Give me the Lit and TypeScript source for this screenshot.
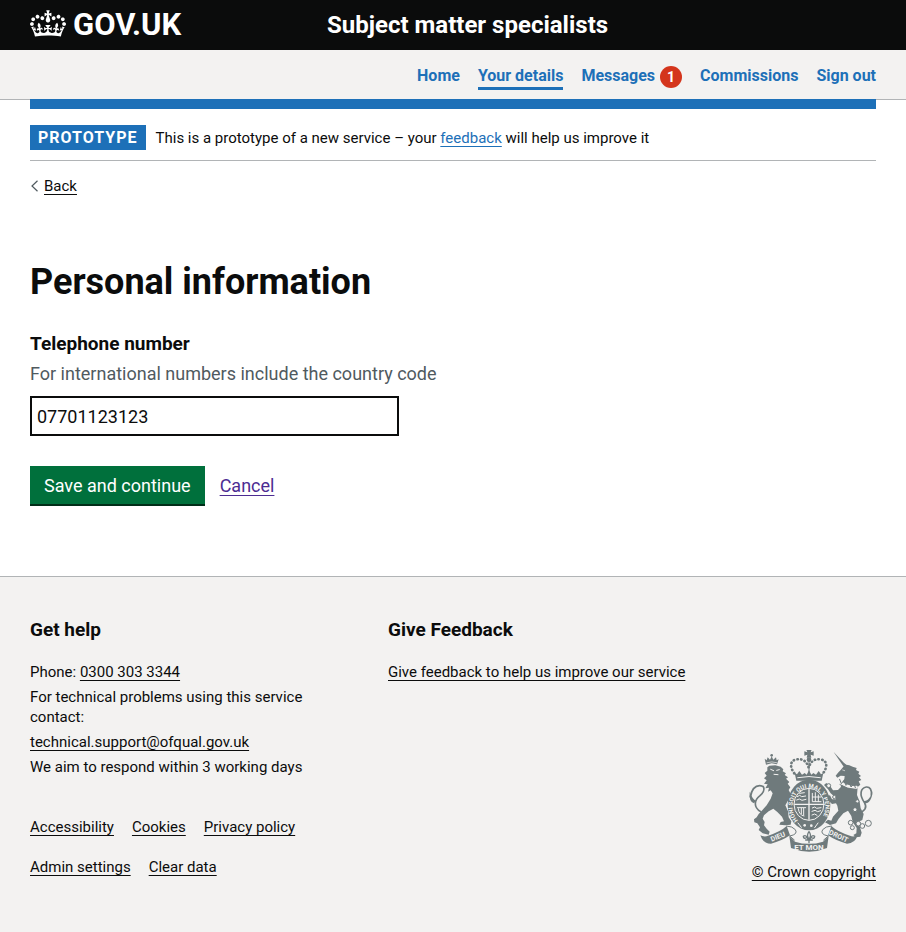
import { LitElement, html, svg, css } from "lit";
import { customElement, property, state } from "lit/decorators.js";

interface NavItem {
  label: string;
  current?: boolean;
  count?: number;
}

const NAV_ITEMS: NavItem[] = [
  { label: "Home" },
  { label: "Your details", current: true },
  { label: "Messages", count: 1 },
  { label: "Commissions" },
  { label: "Sign out" },
];

const META_LINKS: string[][] = [
  ["Accessibility", "Cookies", "Privacy policy"],
  ["Admin settings", "Clear data"],
];

const linkStyles = css`
  a {
    color: inherit;
    text-decoration: underline;
    text-decoration-thickness: 1px;
    text-underline-offset: 3px;
    text-decoration-skip-ink: none;
  }
`;

const crown = svg`
  <path fill="currentColor" fill-rule="evenodd" d="M25 30.2c3.5 1.5 7.7-.2 9.1-3.7 1.5-3.6-.2-7.8-3.9-9.2-3.6-1.4-7.6.3-9.1 3.9-1.4 3.5.3 7.5 3.9 9zM9 39.5c3.6 1.5 7.8-.2 9.2-3.7 1.5-3.6-.2-7.8-3.9-9.1-3.6-1.5-7.6.2-9.1 3.8-1.4 3.5.3 7.5 3.8 9zM4.4 57.2c3.5 1.5 7.7-.2 9.1-3.8 1.5-3.6-.2-7.7-3.9-9.1-3.5-1.5-7.6.3-9.1 3.8-1.4 3.5.3 7.6 3.9 9.1zm38.3-21.4c3.5 1.5 7.7-.2 9.1-3.8 1.5-3.6-.2-7.7-3.9-9.1-3.6-1.5-7.6.3-9.1 3.8-1.3 3.6.4 7.7 3.9 9.1zm64.4-5.6c-3.6 1.5-7.8-.2-9.1-3.7-1.5-3.6.2-7.8 3.8-9.2 3.6-1.4 7.7.3 9.2 3.9 1.3 3.5-.4 7.5-3.9 9zm15.9 9.3c-3.6 1.5-7.7-.2-9.1-3.7-1.5-3.6.2-7.8 3.7-9.1 3.6-1.5 7.7.2 9.2 3.8 1.5 3.5-.3 7.5-3.8 9zm4.7 17.7c-3.6 1.5-7.8-.2-9.2-3.8-1.5-3.6.2-7.7 3.9-9.1 3.6-1.5 7.7.3 9.2 3.8 1.3 3.5-.4 7.6-3.9 9.1zM89.3 35.8c-3.6 1.5-7.8-.2-9.2-3.8-1.4-3.6.2-7.7 3.9-9.1 3.6-1.5 7.7.3 9.2 3.8 1.4 3.6-.3 7.7-3.9 9.1zM69.7 17.7l8.9 4.7V9.3l-8.9 2.8c-.2-.3-.5-.6-.9-.9L72.4 0H59.6l3.5 11.2c-.3.3-.6.5-.9.9l-8.8-2.8v13.1l8.8-4.7c.3.3.6.7.9.9l-5 15.4v.1c-.2.8-.4 1.6-.4 2.4 0 4.1 3.1 7.5 7 8.1h.2c.3 0 .7.1 1 .1.4 0 .7 0 1-.1h.2c4-.6 7.1-4.1 7.1-8.1 0-.8-.1-1.7-.4-2.4V34l-5.1-15.4c.4-.2.7-.6 1-.9zM66 92.8c16.9 0 32.8 1.1 47.1 3.2 4-16.9 8.9-26.7 14-33.5l-9.6-3.4c1 4.9 1.1 7.2 0 10.2-1.5-1.4-3-4.3-4.2-8.7L108.6 76c2.8-2 5-3.2 7.5-3.3-4.4 9.4-10 11.9-13.6 11.2-4.3-.8-6.3-4.6-5.6-7.9 1-4.7 5.7-5.9 8-.5 4.3-8.7-3-11.4-7.6-8.8 7.1-7.2 7.9-13.5 2.1-21.1-8 6.1-8.1 12.3-4.5 20.8-4.7-5.4-12.1-2.5-9.5 6.2 3.4-5.2 7.9-2 7.2 3.1-.6 4.3-6.4 7.8-13.5 7.2-10.3-.9-10.9-8-11.2-13.8 2.5-.5 7.1 1.8 11 7.3L80.2 60c-4.1 4.4-8 5.3-12.3 5.4 1.4-4.4 8-11.6 8-11.6H55.5s6.4 7.2 7.9 11.6c-4.2-.1-8-1-12.3-5.4l1.4 16.4c3.9-5.5 8.5-7.7 10.9-7.3-.3 5.8-.9 12.8-11.1 13.8-7.2.6-12.9-2.9-13.5-7.2-.7-5 3.8-8.3 7.1-3.1 2.7-8.7-4.6-11.6-9.4-6.2 3.7-8.5 3.6-14.7-4.6-20.8-5.8 7.6-5 13.9 2.2 21.1-4.7-2.6-11.9.1-7.7 8.8 2.3-5.5 7.1-4.2 8.1.5.7 3.3-1.3 7.1-5.7 7.9-3.5.7-9-1.8-13.5-11.2 2.5.1 4.7 1.3 7.5 3.3l-4.7-15.4c-1.2 4.4-2.7 7.2-4.3 8.7-1.1-3-.9-5.3 0-10.2l-9.5 3.4c5 6.9 9.9 16.7 14 33.5 14.8-2.1 30.8-3.2 47.7-3.2z"/>
`;

@customElement("service-header")
class ServiceHeader extends LitElement {
  @property() serviceName = "";

  static styles = css`
    :host {
      display: block;
      background: #0b0c0c;
      color: #ffffff;
    }
    .bar {
      display: grid;
      grid-template-columns: 297fr 549fr;
      align-items: center;
      height: 50px;
      margin: 0 30px;
    }
    a {
      color: inherit;
      text-decoration: none;
      font-weight: 700;
    }
    .logo {
      display: flex;
      align-items: flex-start;
      gap: 7px;
      font-size: 31px;
      line-height: 30px;
    }
    .crown {
      display: block;
      width: 36px;
      height: 27px;
    }
    .service {
      font-size: 24px;
      line-height: 30px;
    }
  `;

  render() {
    return html`
      <header class="bar">
        <a class="logo" href="#">
          <svg class="crown" viewBox="0 0 132 97" aria-hidden="true">${crown}</svg>
          <span>GOV.UK</span>
        </a>
        <a class="service" href="#">${this.serviceName}</a>
      </header>
    `;
  }
}

@customElement("primary-nav")
class PrimaryNav extends LitElement {
  static styles = css`
    :host {
      display: block;
      background: #f3f2f1;
      border-bottom: 1px solid #b1b4b6;
      color: #1d70b8;
    }
    ul {
      display: flex;
      justify-content: flex-end;
      gap: 18px;
      height: 49px;
      margin: 0 30px;
      padding: 0;
      list-style: none;
    }
    li {
      display: flex;
      align-items: center;
      gap: 5px;
    }
    a {
      padding: 5px 0 0;
      border-bottom: 3px solid transparent;
      color: inherit;
      font-size: 16px;
      font-weight: 700;
      line-height: 22px;
      text-decoration: none;
    }
    a[aria-current] {
      border-bottom-color: currentColor;
    }
    .count {
      width: 22px;
      margin-top: 4px;
      border-radius: 50%;
      background: #d4351c;
      color: #ffffff;
      font-size: 14px;
      font-weight: 700;
      line-height: 22px;
      text-align: center;
    }
  `;

  render() {
    return html`
      <nav aria-label="Account">
        <ul>
          ${NAV_ITEMS.map(
            (item) => html`<li>
              ${item.current
                ? html`<a href="#" aria-current="page">${item.label}</a>`
                : html`<a href="#">${item.label}</a>`}
              ${item.count ? html`<span class="count">${item.count}</span>` : ""}
            </li>`
          )}
        </ul>
      </nav>
    `;
  }
}

@customElement("royal-arms")
class RoyalArms extends LitElement {
  static styles = css`
    :host {
      display: block;
      color: #6f7a7c;
    }
    svg {
      display: block;
      width: 125px;
      height: 102px;
    }
    text {
      font-weight: 700;
    }
    .ink {
      fill: currentColor;
    }
    .paper {
      fill: #f3f2f1;
    }
    .ink-line {
      fill: none;
      stroke: currentColor;
      stroke-linecap: round;
      stroke-linejoin: round;
    }
    .paper-line {
      fill: none;
      stroke: #f3f2f1;
      stroke-linecap: round;
    }
  `;

  render() {
    return html`
      <svg viewBox="36 30 375 306" role="img" aria-label="Royal coat of arms">
        <!-- lion -->
        <path class="ink" d="M90 74L86 56l6 5 3-9 7 7 5-10 5 10 8-7 2 9 6-3-5 15-16-3z" />
        <path class="paper-line" stroke-width="2" d="M93 68q14-5 29 0" />
        <circle class="ink" cx="107" cy="46" r="4" />
        <path class="ink" d="M94 82L100 77 118 76 134 80 142 88 140 94 150 100 146 105 156 112 150 116 160 126 155 131 163 142 158 150 164 162 172 172 168 184 157 180 148 196 156 214 158 232 166 244 164 254 148 256 130 254 134 246 144 244 138 230 124 216 112 206 98 214 84 226 80 236 86 246 84 256 92 266 101 275 98 284 80 280 68 270 72 262 64 250 55 247 54 238 62 232 68 222 76 214 92 196 104 176 110 160 104 151 96 155 99 143 88 145 95 133 84 131 92 121 84 115 92 107 86 99 94 92z" />
        <path class="paper-line" stroke-width="3" d="M104 88l9 4 M122 91l8-2 M114 103l12 1" />
        <path class="ink-line" stroke-width="5" d="M74 215c-22-14-20-34-2-48 16-14 16-30-1-30-15 0-24 12-28 34" />
        <path class="ink" d="M41 155q9 24 19 27l-6 8q-16-6-13-35z" />
        <!-- crown -->
        <path class="ink" d="M211 29h16l-3 8 9-3v13l-9-3 2 9h-14l2-9-9 3V34l9 3z" />
        <circle class="ink" cx="219" cy="59" r="7" />
        <path class="ink-line" stroke-width="3" d="M219 62v40" />
        <path class="ink-line" stroke-width="8" stroke-dasharray="1 10" d="M175 100c-15-20-13-39 8-42 17-2 29 5 35 25 6-20 18-27 35-25 21 3 23 22 8 42" />
        <path class="ink" d="M176 99l7 4 7-10 8 11 8-5 6 5 7-13 7 13 6-5 8 5 8-11 7 10 7-4-5 23H181z" />
        <path class="paper-line" stroke-width="3" d="M185 113q34-7 68 0" />
        <!-- shield and garter -->
        <ellipse class="ink" cx="219" cy="195" rx="64" ry="76" />
        <ellipse class="paper-line" cx="219" cy="193" rx="45" ry="48" stroke-width="3" />
        <path class="paper-line" stroke-width="4" d="M219 148v90 M176 193h86" />
        <path class="paper-line" stroke-width="3" d="M184 170l7-4 6 4 12-2 M182 180l8-3 8 4 12-3 M191 160l14-2
          M229 160v25h26 M238 158v26 M229 171h26 M247 165v20
          M184 203h25 M187 206q2 20 17 22 M196 205v16 M203 205v20
          M229 204l7-3 6 4 13-2 M228 214l9-3 8 4 9-3 M228 225l8-3 7 4" />
        <path id="garter" fill="none" d="M186 241A49 56 0 1 1 252 241" />
        <text class="paper" font-size="18"><textPath href="#garter">HONI SOIT QUI MAL Y PENSE</textPath></text>
        <circle class="paper" cx="206" cy="256" r="4" />
        <circle class="paper" cx="226" cy="257" r="4" />
        <path class="paper-line" stroke-width="3" d="M186 249l10 13 M246 249l-10 14" />
        <!-- unicorn -->
        <path class="ink" d="M293 36L329 74 322 79z" />
        <path class="ink" d="M322 80L325 70 331 74 340 76 350 80 362 84 360 90 370 95 367 101 375 108 369 112 376 120 368 124 373 134 365 141 363 165 371 185 374 205 383 222 379 240 366 246 372 262 377 278 373 290 360 292 352 285 361 280 362 264 350 246 346 228 336 212 322 220 308 236 300 250 282 255 267 247 276 239 286 242 291 230 307 212 304 197 300 190 288 192 276 180 273 169 282 166 288 178 300 178 296 170 284 160 276 148 264 135 271 129 284 140 291 151 306 150 314 142 318 130 325 117 326 108 314 107 304 113 299 107 306 98 314 90z" />
        <path class="paper-line" stroke-width="2" d="M320 90l6 2" />
        <path class="paper-line" stroke-width="9" d="M315 128q22 16 46 14" />
        <path class="ink-line" stroke-width="3" d="M311 118l5 13 8-10 6 15 10-11 5 16 9-10 4 12 M312 134q22 14 46 14" />
        <path class="ink-line" stroke-width="5" d="M368 219c18-5 26-16 18-30-18-26-12-45 5-48 11-1 17 9 15 24" />
        <path class="ink" d="M410 152c-2 26-10 38-24 38l-4-7c14 0 22-10 28-31z" />
        <g fill="#f3f2f1" stroke="currentColor" stroke-width="3">
          <circle cx="278" cy="137" r="6" />
          <circle cx="295" cy="171" r="5" />
          <circle cx="364" cy="184" r="5" />
          <circle cx="357" cy="209" r="6" />
          <circle cx="344" cy="248" r="7" />
          <circle cx="349" cy="263" r="6" />
          <circle cx="367" cy="251" r="7" />
          <circle cx="379" cy="258" r="7" />
          <circle cx="397" cy="250" r="9" />
        </g>
        <!-- motto ribbon -->
        <path class="ink" d="M73 286q14 6 23 1 38-12 56-29l10 28q-25 17-57 25-24 0-32-25z M365 286q-14 6-23 1-38-12-56-29l-10 28q25 17 57 25 24 0 32-25z" />
        <path class="ink-line" stroke-width="3" d="M152 258q18 1 26 11 9 14-17 19l14 12 M286 258q-18 1-26 11-9 14 17 19l-14 12" />
        <path class="ink" d="M160 288l17 17q42 13 84 0l17-17-5 36q-53 22-108 0z" />
        <text class="paper" font-size="21" transform="translate(107 305) rotate(-22)">DIEU</text>
        <text class="paper" font-size="21" transform="translate(277 282) rotate(25)">DROIT</text>
        <text class="paper" font-size="24" x="219" y="331" text-anchor="middle">ET MON</text>
        <!-- fleur-de-lis -->
        <path class="ink-line" stroke-width="4" d="M219 275q-9 11 0 23 9-12 0-23 M216 299q-5-17-14-10 1 8 8 5 M222 299q5-17 14-10-1 8-8 5 M209 300h20 M219 300v8" />
      </svg>
    `;
  }
}

@customElement("service-footer")
class ServiceFooter extends LitElement {
  static styles = [
    linkStyles,
    css`
      :host {
        display: block;
        flex: 1;
        border-top: 1px solid #b1b4b6;
        background: #f3f2f1;
        font-size: 15px;
        line-height: 20px;
      }
      footer {
        padding: 40px 30px 35px;
      }
      .columns {
        display: grid;
        grid-template-columns: 328fr 488fr;
        gap: 30px;
      }
      h2 {
        margin: 0 0 20px;
        font-size: 19px;
        line-height: 25px;
      }
      p {
        margin: 0 0 5px;
      }
      .meta {
        padding-top: 35px;
      }
      .meta ul {
        display: flex;
        gap: 18px;
        margin: 0 0 20px;
        padding: 0;
        list-style: none;
      }
      .lower {
        display: grid;
        grid-template-columns: 1fr auto;
        align-items: end;
      }
      .copyright {
        display: flex;
        flex-direction: column;
        align-items: flex-end;
        gap: 10px;
        margin-top: -32px;
        padding-bottom: 15px;
      }
      royal-arms {
        margin: 0 3px;
      }
    `,
  ];

  render() {
    return html`
      <footer>
        <div class="columns">
          <section>
            <h2>Get help</h2>
            <p>Phone: <a href="#">0300 303 3344</a></p>
            <p>For technical problems using this service contact:</p>
            <p><a href="#">technical.support@ofqual.gov.uk</a></p>
            <p>We aim to respond within 3 working days</p>
          </section>
          <section>
            <h2>Give Feedback</h2>
            <p><a href="#">Give feedback to help us improve our service</a></p>
          </section>
        </div>
        <div class="lower">
          <div class="meta">
            ${META_LINKS.map(
              (row) => html`<ul>
                ${row.map((label) => html`<li><a href="#">${label}</a></li>`)}
              </ul>`
            )}
          </div>
          <div class="copyright">
            <royal-arms></royal-arms>
            <a href="#">© Crown copyright</a>
          </div>
        </div>
      </footer>
    `;
  }
}

@customElement("app-root")
class AppRoot extends LitElement {
  @state() telephone = "07701123123";

  static styles = [
    linkStyles,
    css`
      :host {
        display: flex;
        flex-direction: column;
        min-height: 100vh;
        background: #ffffff;
        color: #0b0c0c;
        font-family: Roboto, "Liberation Sans", sans-serif;
      }
      .page {
        padding: 0 30px 70px;
      }
      .strip {
        height: 10px;
        margin-top: -1px;
        background: #1d70b8;
      }
      .phase {
        display: flex;
        align-items: center;
        gap: 10px;
        margin: 0;
        padding: 16px 0 10px;
        border-bottom: 1px solid #b1b4b6;
        font-size: 15px;
        line-height: 20px;
      }
      .phase a {
        color: #1d70b8;
      }
      .tag {
        padding: 0 8px;
        background: #1d70b8;
        color: #ffffff;
        font-size: 16px;
        letter-spacing: 1px;
        line-height: 25px;
      }
      .back {
        display: flex;
        align-items: center;
        gap: 5px;
        width: max-content;
        margin-top: 15px;
        font-size: 15px;
        line-height: 20px;
        text-decoration: none;
      }
      .back span {
        text-decoration: underline;
        text-decoration-thickness: 1px;
        text-underline-offset: 3px;
      }
      .back svg {
        display: block;
        width: 9px;
        height: 12px;
      }
      h1 {
        margin: 66px 0 29px;
        font-size: 36px;
        line-height: 40px;
      }
      label {
        display: block;
        margin-bottom: 5px;
        font-size: 19px;
        font-weight: 700;
        line-height: 25px;
      }
      .hint {
        margin-bottom: 10px;
        color: #505a5f;
        font-size: 18px;
        line-height: 25px;
      }
      input {
        display: block;
        box-sizing: border-box;
        width: 100%;
        max-width: 369px;
        height: 40px;
        padding: 5px;
        border: 2px solid #0b0c0c;
        border-radius: 0;
        background: #ffffff;
        color: #0b0c0c;
        font-family: inherit;
        font-size: 18px;
      }
      .actions {
        display: flex;
        align-items: baseline;
        gap: 15px;
        margin-top: 30px;
        font-size: 18px;
      }
      button {
        height: 38px;
        margin: 0 0 2px;
        padding: 0 14px;
        border: 0;
        background: #00703c;
        box-shadow: 0 2px 0 #002d18;
        color: #ffffff;
        font-family: inherit;
        font-size: 18px;
      }
      .cancel {
        color: #4c2c92;
      }
    `,
  ];

  private onInput(event: Event) {
    this.telephone = (event.target as HTMLInputElement).value;
  }

  render() {
    return html`
      <service-header serviceName="Subject matter specialists"></service-header>
      <primary-nav></primary-nav>
      <div class="page">
        <div class="strip"></div>
        <p class="phase">
          <strong class="tag">PROTOTYPE</strong>
          <span>This is a prototype of a new service – your <a href="#">feedback</a> will help us improve it</span>
        </p>
        <a class="back" href="#">
          <svg viewBox="0 0 9 12" aria-hidden="true">
            <path d="M7.5 .8L2 6l5.500 5.200" fill="none" stroke="#505a5f" stroke-width="1.200" />
          </svg>
          <span>Back</span>
        </a>
        <main>
          <h1>Personal information</h1>
          <form @submit=${(event: Event) => event.preventDefault()}>
            <label for="telephone">Telephone number</label>
            <div class="hint" id="telephone-hint">For international numbers include the country code</div>
            <input
              id="telephone"
              type="tel"
              aria-describedby="telephone-hint"
              .value=${this.telephone}
              @input=${this.onInput}
            />
            <div class="actions">
              <button type="submit">Save and continue</button>
              <a class="cancel" href="#">Cancel</a>
            </div>
          </form>
        </main>
      </div>
      <service-footer></service-footer>
    `;
  }
}
